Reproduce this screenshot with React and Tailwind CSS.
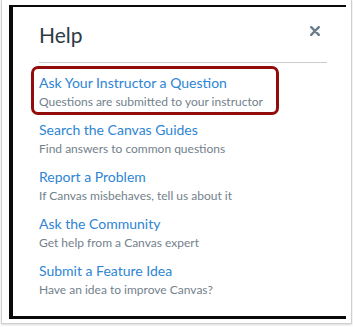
export default function App() {
  const items = [
    { title: 'Ask Your Instructor a Question', desc: 'Questions are submitted to your instructor', boxed: true },
    { title: 'Search the Canvas Guides', desc: 'Find answers to common questions' },
    { title: 'Report a Problem', desc: 'If Canvas misbehaves, tell us about it' },
    { title: 'Ask the Community', desc: 'Get help from a Canvas expert' },
    { title: 'Submit a Feature Idea', desc: 'Have an idea to improve Canvas?' },
  ]
  return (
    <div className="w-[353px] h-[327px] bg-white [font-family:Lato,sans-serif]">
      <div className="ml-[1px] w-[351px] h-[324px] border-x border-b border-[#cfcfcf] shadow-[0_1px_2px_rgba(0,0,0,0.15)] pt-[5px] pl-[7px]">
        <div className="w-[337px] h-[314px] border-l-4 border-t-2 border-b-[3px] border-[#0a0a0a] bg-white pl-[26px] pr-[19px] pt-[14px]">
          <div className="flex justify-between">
            <h1 className="text-[21px] leading-[28px] text-[#2d3b45]">Help</h1>
            <svg className="mt-[5px] mr-[7px]" width="10" height="10" viewBox="0 0 10 10">
              <path d="M1.2 1.2 L8.8 8.8 M8.8 1.2 L1.2 8.8" stroke="#6b7d8b" strokeWidth="2.4" strokeLinecap="round" />
            </svg>
          </div>
          <div className="mt-[13px] h-px bg-[#c7cdd1]" />
          <ul className="mt-[10px] flex flex-col gap-[9px]">
            {items.map(it => (
              <li key={it.title} className="relative">
                {it.boxed && (
                  <div className="absolute left-[-8px] top-[-7px] w-[248px] h-[49px] border-[3px] border-[#930c0c] rounded-[7px]" />
                )}
                <a className="block text-[14px] leading-[20px] text-[#2d85d3]">{it.title}</a>
                <p className="text-[12px] leading-[18px] text-[#73818c]">{it.desc}</p>
              </li>
            ))}
          </ul>
        </div>
      </div>
    </div>
  )
}
